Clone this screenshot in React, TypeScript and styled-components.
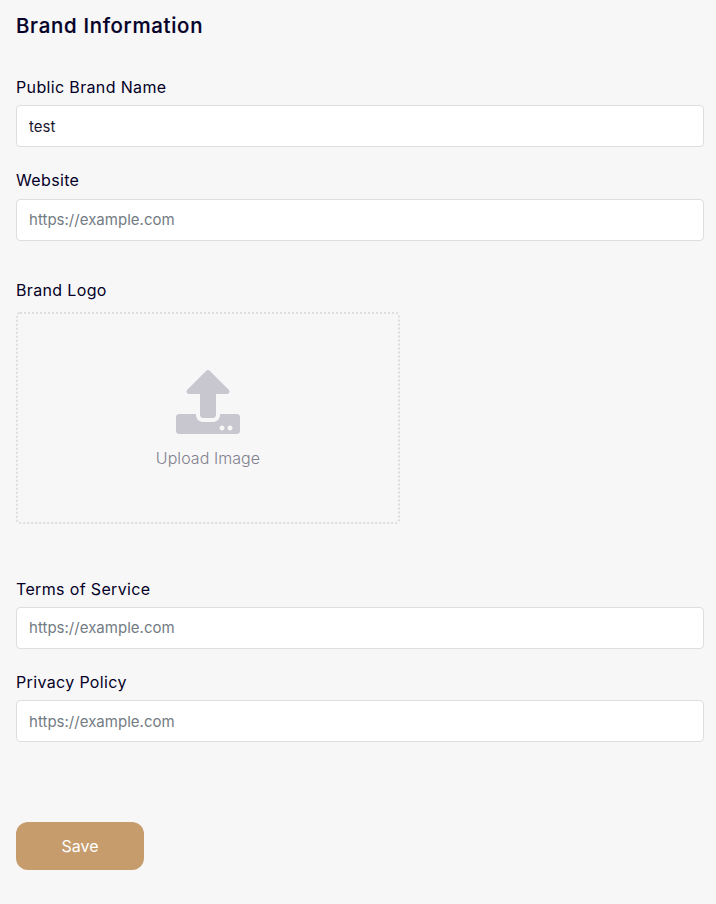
import React from "react";
import styled, { createGlobalStyle } from "styled-components";

const GlobalStyle = createGlobalStyle`
  *, *::before, *::after { box-sizing: border-box; }
  body {
    margin: 0;
    background: #f7f7f7;
    font-family: Inter, sans-serif;
    font-size: 16px;
    line-height: 24px;
    color: #040027;
  }
`;

const Form = styled.form`
  display: flex;
  flex-direction: column;
  align-items: flex-start;
  min-height: 904px;
  padding: 11px 12px 0 16px;
`;

const Title = styled.h1`
  margin: 0 0 34px;
  font-size: 20.4px;
  font-weight: 500;
  line-height: 30px;
  letter-spacing: 0.72px;
  -webkit-text-stroke: 0.2px currentColor;
`;

const Field = styled.div<{ $gap: number }>`
  display: flex;
  flex-direction: column;
  width: 100%;
  margin-bottom: ${(p) => p.$gap}px;
`;

const Label = styled.label<{ $gap?: number }>`
  margin-bottom: ${(p) => p.$gap ?? 6}px;
  letter-spacing: 0.35px;
`;

const Input = styled.input<{ $raised?: boolean }>`
  height: 42px;
  padding: 0 12px ${(p) => (p.$raised ? 2 : 0)}px;
  border: 1px solid #dedede;
  border-radius: 4px;
  background: #fff;
  color: #1a1730;
  font: 400 15px/22px Inter, sans-serif;
  letter-spacing: 0.02px;
  outline: none;

  &::placeholder {
    color: #737b83;
    opacity: 1;
  }
`;

const UploadArea = styled.div`
  display: flex;
  flex-direction: column;
  align-items: center;
  width: 384px;
  height: 212px;
  padding-top: 56px;
  border: 2px dotted #dedede;
  border-radius: 4px;
`;

const UploadText = styled.span`
  margin-top: 12px;
  color: #82808f;
  font-weight: 300;
  letter-spacing: 0.06px;
`;

const SaveButton = styled.button`
  width: 128px;
  height: 48px;
  padding: 0;
  border: 0;
  border-radius: 12px;
  background: #c69c6d;
  color: #fff;
  font: 400 16px/24px Inter, sans-serif;
`;

const UploadIcon = () => (
  <svg width="64" height="64" viewBox="0 0 512 512" fill="#c8c6cf" aria-hidden="true">
    <path d="M296 384h-80c-13.3 0-24-10.7-24-24V192h-87.7c-17.8 0-26.7-21.5-14.1-34.1L242.3 5.700c7.500-7.500 19.800-7.500 27.300 0l152.200 152.200c12.600 12.600 3.700 34.100-14.100 34.100H320v168c0 13.300-10.700 24-24 24zm216-8v112c0 13.300-10.700 24-24 24H24c-13.300 0-24-10.700-24-24V376c0-13.300 10.700-24 24-24h136v8c0 30.900 25.100 56 56 56h80c30.900 0 56-25.100 56-56v-8h136c13.300 0 24 10.700 24 24zm-124 88c0-11-9-20-20-20s-20 9-20 20 9 20 20 20 20-9 20-20zm64 0c0-11-9-20-20-20s-20 9-20 20 9 20 20 20 20-9 20-20z" />
  </svg>
);

const urlPlaceholder = "https://example.com";

export default function App() {
  return (
    <>
      <GlobalStyle />
      <Form>
        <Title>Brand Information</Title>
        <Field $gap={21}>
          <Label htmlFor="name">Public Brand Name</Label>
          <Input id="name" defaultValue="test" />
        </Field>
        <Field $gap={37}>
          <Label $gap={7} htmlFor="website">Website</Label>
          <Input id="website" $raised placeholder={urlPlaceholder} />
        </Field>
        <Field $gap={53}>
          <Label $gap={10}>Brand Logo</Label>
          <UploadArea>
            <UploadIcon />
            <UploadText>Upload Image</UploadText>
          </UploadArea>
        </Field>
        <Field $gap={21}>
          <Label htmlFor="terms">Terms of Service</Label>
          <Input id="terms" $raised placeholder={urlPlaceholder} />
        </Field>
        <Field $gap={80}>
          <Label htmlFor="privacy">Privacy Policy</Label>
          <Input id="privacy" placeholder={urlPlaceholder} />
        </Field>
        <SaveButton type="button">Save</SaveButton>
      </Form>
    </>
  );
}
